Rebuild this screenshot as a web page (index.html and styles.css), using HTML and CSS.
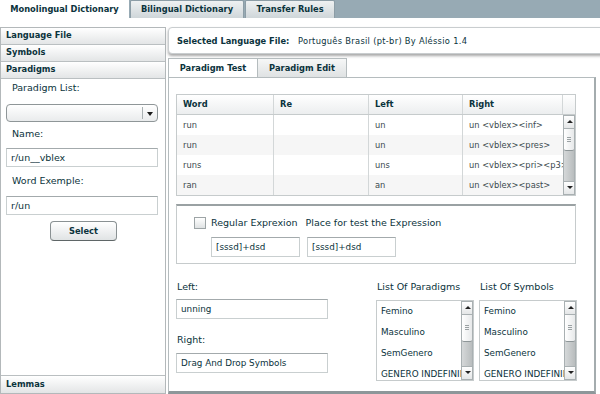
FILE: index.html
```html
<!DOCTYPE html>
<html>
<head>
<meta charset="utf-8">
<link rel="stylesheet" href="styles.css">
</head>
<body>
<div class="apptabs">
  <div class="atab sel">Monolingual Dictionary</div>
  <div class="atab">Bilingual Dictionary</div>
  <div class="atab">Transfer Rules</div>
</div>
<div class="main">
  <aside class="left">
    <div class="acc-h">Language File</div>
    <div class="acc-h">Symbols</div>
    <div class="acc-h">Paradigms</div>
    <div class="acc-body">
      <div class="lbl l1">Paradigm List:</div>
      <div class="combo"><span class="combo-btn"></span></div>
      <div class="lbl l2">Name:</div>
      <div class="input in1">r/un__vblex</div>
      <div class="lbl l3">Word Exemple:</div>
      <div class="input in2">r/un</div>
      <div class="btn">Select</div>
    </div>
    <div class="acc-h last">Lemmas</div>
  </aside>
  <section class="right">
    <div class="selbox"><b>Selected Language File:</b><span>Português Brasil (pt-br) By Aléssio 1.4</span></div>
    <div class="subtabs">
      <div class="stab sel">Paradigm Test</div>
      <div class="stab">Paradigm Edit</div>
    </div>
    <div class="panel">
      <div class="grid">
        <div class="ghead">
          <div class="c c1">Word</div><div class="c c2">Re</div><div class="c c3">Left</div><div class="c c4">Right</div><div class="c c5"></div>
        </div>
        <div class="gbody">
          <div class="rows">
            <div class="row"><div class="c c1">run</div><div class="c c2"></div><div class="c c3">un</div><div class="c c4">un &lt;vblex&gt;&lt;inf&gt;</div></div>
            <div class="row alt"><div class="c c1">run</div><div class="c c2"></div><div class="c c3">un</div><div class="c c4">un &lt;vblex&gt;&lt;pres&gt;</div></div>
            <div class="row"><div class="c c1">runs</div><div class="c c2"></div><div class="c c3">uns</div><div class="c c4">un &lt;vblex&gt;&lt;pri&gt;&lt;p3&gt;&lt;sg&gt;</div></div>
            <div class="row alt"><div class="c c1">ran</div><div class="c c2"></div><div class="c c3">an</div><div class="c c4">un &lt;vblex&gt;&lt;past&gt;</div></div>
          </div>
          <div class="vscroll gs">
            <div class="sb-up"></div><div class="sb-thumb"></div><div class="sb-track"></div><div class="sb-down"></div>
          </div>
        </div>
      </div>

      <div class="regex">
        <div class="rx-row">
          <span class="chk"></span>
          <span class="rx-l1">Regular Exprexion</span>
          <span class="rx-l2">Place for test the Expression</span>
        </div>
        <div class="rx-row2">
          <div class="input rin">[sssd]+dsd</div>
          <div class="input rin">[sssd]+dsd</div>
        </div>
      </div>

      <div class="bottom">
        <div class="bcol">
          <div class="lbl b1">Left:</div>
          <div class="input bin">unning</div>
          <div class="lbl b2">Right:</div>
          <div class="input bin">Drag And Drop Symbols</div>
        </div>
        <div class="lcol lp">
          <div class="lbl b1">List Of Paradigms</div>
          <div class="list">
            <div class="items">
              <div>Femino</div><div>Masculino</div><div>SemGenero</div><div>GENERO INDEFINIDO</div>
            </div>
            <div class="vscroll ls">
              <div class="sb-up"></div><div class="sb-thumb"></div><div class="sb-track"></div><div class="sb-down"></div>
            </div>
          </div>
        </div>
        <div class="lcol ls2">
          <div class="lbl b1">List Of Symbols</div>
          <div class="list">
            <div class="items">
              <div>Femino</div><div>Masculino</div><div>SemGenero</div><div>GENERO INDEFINIDO</div>
            </div>
            <div class="vscroll ls">
              <div class="sb-up"></div><div class="sb-thumb"></div><div class="sb-track"></div><div class="sb-down"></div>
            </div>
          </div>
        </div>
      </div>
    </div>
  </section>
</div>
</body>
</html>
```

FILE: styles.css
```css
* { box-sizing: border-box; }
html, body { margin: 0; padding: 0; }
body {
  width: 600px; height: 394px; overflow: hidden;
  background: #ffffff;
  font-family: "DejaVu Sans", Verdana, sans-serif;
  font-size: 9.5px;
  color: #0b333c;
}

/* top application tabs */
.apptabs {
  display: flex; height: 18px;
  background: #97aab4;
}
.atab {
  height: 18px; line-height: 17px;
  font-weight: bold; font-size: 8.3px;
  text-align: center;
  background: linear-gradient(#eef1f2, #cfd6d9);
  border: 1px solid #8c9da6; border-bottom: none;
  border-radius: 2px 2px 0 0;
}
.atab.sel { width: 129px; background: #ffffff; border-color: #ffffff; border-radius: 0; }
.atab:nth-child(2) { width: 114px; margin-left: 1px; }
.atab:nth-child(3) { width: 90px; margin-left: 1px; }

.main { display: flex; gap: 2px; padding-top: 9px; }

/* left accordion */
.left {
  width: 166px; height: 367px;
  border: 1px solid #b3b8ba;
  display: flex; flex-direction: column;
  background: #ffffff;
}
.acc-h {
  height: 17px; line-height: 15px;
  padding-left: 5px;
  font-weight: bold; font-size: 8.3px;
  background: linear-gradient(#ffffff, #e3e5e6);
  border-bottom: 1px solid #babfc1;
  flex: none;
}
.acc-h.last { border-bottom: none; border-top: 1px solid #babfc1; height: 18px; line-height: 16px; }
.acc-body { flex: 1; padding: 0 7px 0 5px; display: flex; flex-direction: column; }
.lbl { height: 12px; line-height: 12px; padding-left: 6px; white-space: nowrap; }
.l1 { margin-top: 3px; }
.combo {
  margin-top: 10px; height: 18px;
  border: 1px solid #8f9698; border-radius: 4px;
  background: linear-gradient(#ffffff, #e9ebec);
  position: relative;
}
.combo-btn {
  position: absolute; right: 0; top: 2px; bottom: 2px; width: 15px;
  border-left: 1px solid #a9b0b2;
}
.combo-btn::after {
  content: ""; position: absolute; left: 4px; top: 5px;
  border-left: 3.5px solid transparent; border-right: 3.5px solid transparent;
  border-top: 4px solid #1a1a1a;
}
.l2 { margin-top: 6px; }
.input {
  height: 19px; line-height: 17px;
  padding-left: 4px;
  border: 1px solid #c9cfd0; border-top-color: #a3aaac;
  background: #ffffff;
  white-space: nowrap; overflow: hidden;
}
.in1 { margin-top: 8px; }
.l3 { margin-top: 8px; }
.in2 { margin-top: 9px; }
.btn {
  margin: 6px 0 0 44px; width: 67px; height: 20px; line-height: 18px;
  text-align: center; font-weight: bold; font-size: 8.3px;
  border: 1px solid #8a9193; border-bottom-color: #5f6667; border-radius: 4px;
  background: linear-gradient(#ffffff, #e0e3e4);
}

/* right side */
.right { flex: 1; display: flex; flex-direction: column; }
.selbox {
  height: 27px; margin-right: -6px;
  display: flex; align-items: center;
  padding-left: 8px;
  border: 1px solid #c9cdcf; border-radius: 4px;
  box-shadow: 0 2px 3px rgba(0,0,0,0.35);
  background: #ffffff;
}
.selbox b { font-size: 8.3px; width: 121px; }
.selbox span { font-size: 8.3px; letter-spacing: 0.3px; }

.subtabs { display: flex; margin-top: 4px; height: 19px; }
.stab {
  height: 19px; line-height: 18px; text-align: center;
  font-weight: bold; font-size: 8.3px;
  border: 1px solid #b5bcbe; border-bottom: none;
  background: linear-gradient(#f6f7f7, #dfe2e3);
}
.stab.sel { width: 90px; background: #ffffff; }
.stab:nth-child(2) { width: 89px; border-left: none; }

.panel {
  width: 428px; height: 317px;
  border: 1px solid #b5bcbe; border-bottom: 3px solid #8d979a;
  border-right: 2px solid #a4acae;
  padding: 16px 0 0 7px;
  background: #ffffff;
}

/* data grid */
.grid {
  width: 400px; height: 102px;
  border: 1px solid #c6cbcc;
  display: flex; flex-direction: column;
  font-size: 8.3px;
}
.ghead {
  display: flex; height: 20px; line-height: 19px;
  background: linear-gradient(#ffffff, #eceeef);
  border-bottom: 1px solid #c6cbcc;
  font-weight: bold; flex: none;
}
.c { padding-left: 6px; border-right: 1px solid #d3d7d8; white-space: nowrap; overflow: hidden; }
.c1 { width: 97px; }
.c2 { width: 95px; }
.c3 { width: 94px; }
.c4 { width: 100px; }
.c5 { flex: 1; border-right: none; }
.gbody { flex: 1; display: flex; }
.rows { width: 386px; }
.row { display: flex; height: 20px; line-height: 20px; color: #3a4a4e; }
.row.alt { background: #f6f6f6; }
.row .c4 { width: 100px; border-right: none; }

/* scrollbars */
.vscroll {
  width: 12px; display: flex; flex-direction: column;
  border: 1px solid #a9b0b2;
  background: linear-gradient(90deg, #d5d8d9, #b9bdbe);
}
.gs { width: 13px; }
.sb-up, .sb-down {
  height: 13px; flex: none; position: relative;
  background: linear-gradient(#ffffff, #e4e6e7);
  border-bottom: 1px solid #a9b0b2;
}
.sb-down { border-bottom: none; border-top: 1px solid #a9b0b2; }
.sb-up::after, .sb-down::after {
  content: ""; position: absolute; left: 3px; top: 4px;
  border-left: 3px solid transparent; border-right: 3px solid transparent;
}
.sb-up::after { border-bottom: 3px solid #222; }
.sb-down::after { border-top: 3px solid #222; }
.sb-thumb {
  height: 22px; flex: none; position: relative;
  background: linear-gradient(90deg, #ffffff, #e7e9ea);
  border-bottom: 1px solid #8e9698;
  border-radius: 0 0 2px 2px;
}
.sb-thumb::after {
  content: ""; position: absolute; left: 3px; right: 3px; top: 8px; height: 6px;
  background: repeating-linear-gradient(#9aa1a3 0 1px, transparent 1px 2px);
}
.sb-track { flex: 1; }

/* regex box */
.regex {
  width: 400px; height: 60px; margin-top: 8px;
  border: 1px solid #c6cbcc; border-top: 2px solid #9aa1a3;
  padding-top: 10px;
}
.rx-row { display: flex; align-items: center; height: 13px; padding-left: 17px; }
.chk {
  width: 12px; height: 12px; flex: none;
  border: 1px solid #9da4a6;
  background: linear-gradient(#ffffff, #dfe2e3);
}
.rx-l1 { margin-left: 5px; }
.rx-l2 { margin-left: 8px; }
.rx-row2 { display: flex; gap: 7px; padding-left: 34px; margin-top: 8px; }
.rin { width: 89px; height: 20px; line-height: 18px; font-size: 8.8px; }

/* bottom area */
.bottom { display: flex; width: 402px; }
.bcol { width: 152px; display: flex; flex-direction: column; }
.lbl.b1 { margin-top: 17px; padding-left: 1px; }
.bin { height: 20px; line-height: 18px; margin-top: 6px; font-size: 8.8px; }
.lbl.b2 { margin-top: 15px; padding-left: 1px; }
.bcol .bin:last-child { margin-top: 7px; }
.lcol { width: 98px; display: flex; flex-direction: column; }
.lp { margin-left: 48px; }
.ls2 { margin-left: 5px; }
.list {
  margin-top: 7px; height: 81px;
  border: 1px solid #c6cbcc;
  display: flex;
}
.items { flex: 1; overflow: hidden; padding: 0 0 0 4px; font-size: 8.8px; }
.items div { height: 21px; line-height: 21px; white-space: nowrap; }
.ls { width: 12px; }
.ls .sb-thumb { height: 27px; }
.ls .sb-thumb::after { top: 10px; }
```
